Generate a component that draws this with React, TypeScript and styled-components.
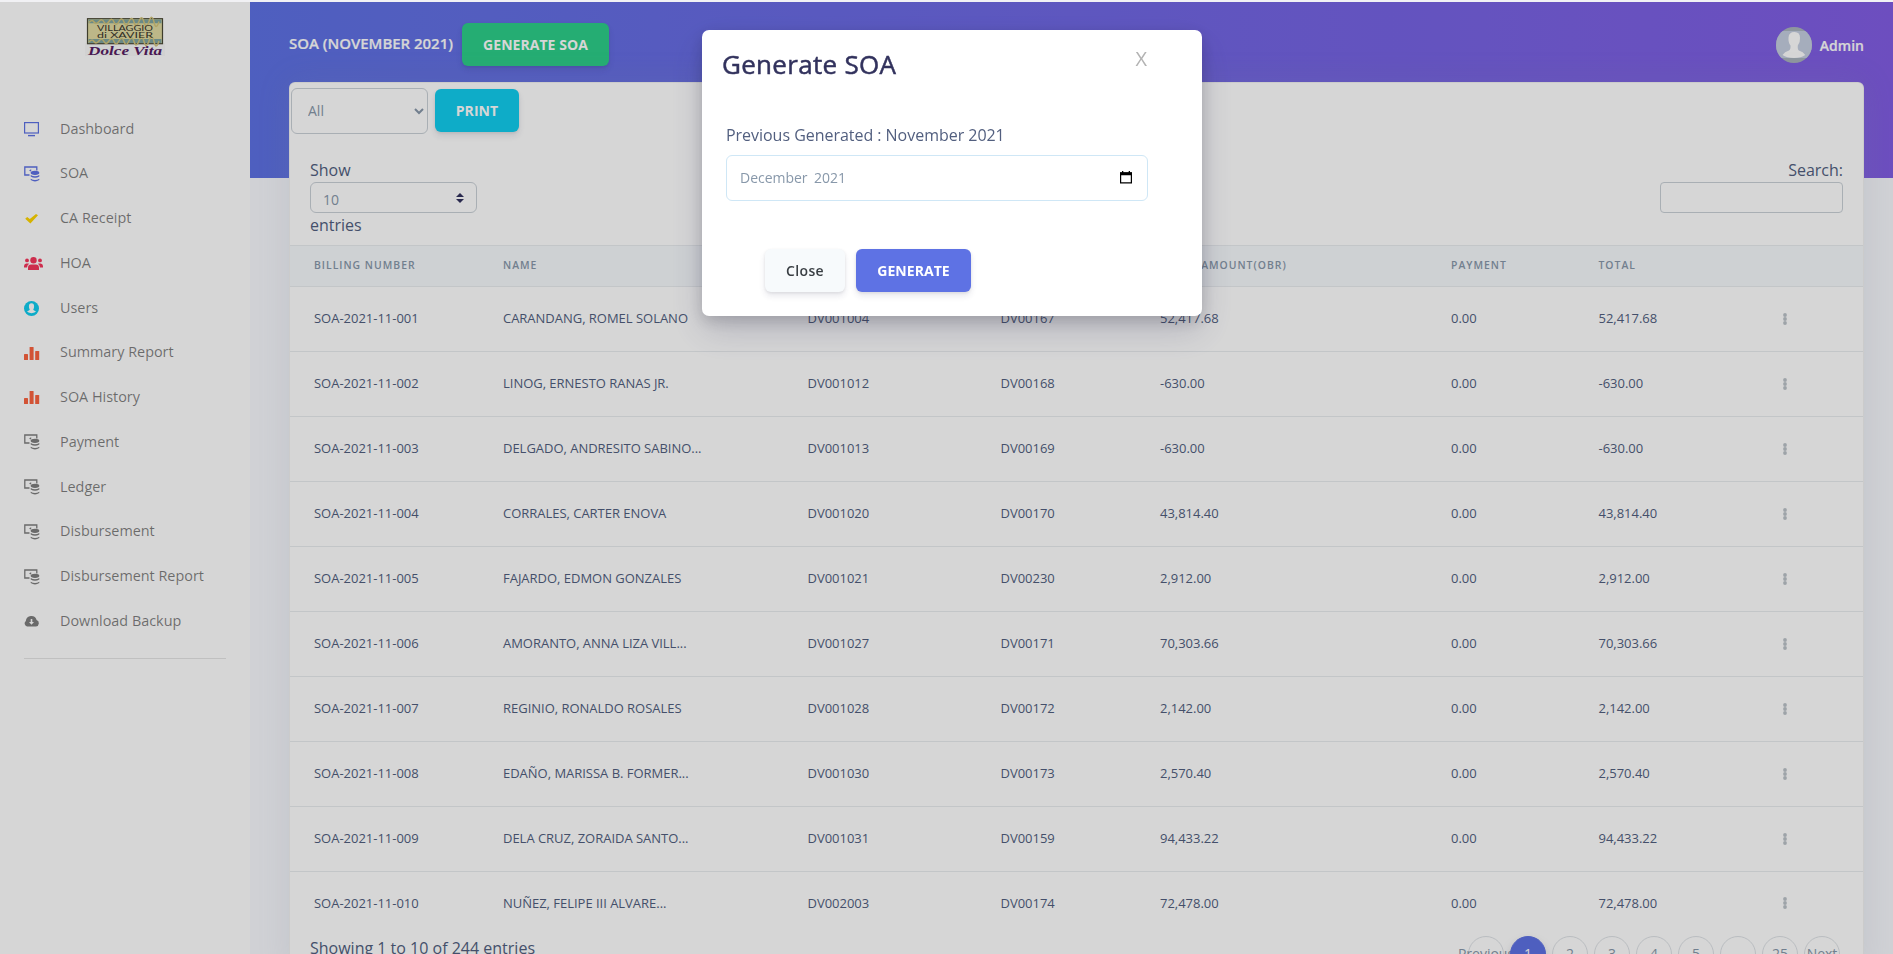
import React from "react";
import styled, { createGlobalStyle, css } from "styled-components";

const Global = createGlobalStyle`
  *, *::before, *::after { box-sizing: border-box; }
  html, body { margin: 0; height: 954px; overflow: hidden; }
  body {
    font-family: "Open Sans", sans-serif;
    font-size: 16px;
    line-height: 1.5;
    color: #525f7f;
    background: #fff;
  }
  button, input, select { font-family: inherit; margin: 0; }
`;

const Page = styled.div`
  display: flex;
  height: 954px;
  overflow: hidden;
  border-top: 2px solid #f1f1f4;
  background: #f8f9fe;
`;

const Sidebar = styled.nav`
  width: 250px;
  flex: none;
  background: #fff;
  box-shadow: 0 0 32px 0 rgba(136, 152, 170, 0.15);
`;

const Brand = styled.div`
  display: flex;
  justify-content: center;
  height: 104px;
  padding-top: 14px;
  svg { display: block; }
`;

const Menu = styled.ul`
  list-style: none;
  margin: 0 24px;
  padding: 0 0 15px;
  border-bottom: 1px solid rgba(0, 0, 0, 0.1);
`;

const MenuItem = styled.li<{ $tint: string }>`
  display: flex;
  align-items: center;
  height: 44.78px;
  font-size: 14.4px;
  color: rgba(0, 0, 0, 0.5);
  svg { flex: none; width: 20px; height: 17px; margin-right: 16px; color: ${(p) => p.$tint}; overflow: visible; position: relative; top: 1px; }
`;

const Main = styled.main`
  flex: 1;
  min-width: 0;
  display: flex;
  flex-direction: column;
  padding: 0 29px 0 39px;
  background: linear-gradient(87deg, #5e72e4 0, #825ee4 100%) 0 0 / 100% 176px no-repeat #f8f9fe;
`;

const Topbar = styled.header`
  display: flex;
  align-items: flex-start;
  height: 80px;
  flex: none;
  padding-top: 21px;
  color: #fff;
`;

const PageName = styled.h4`
  margin: 8px 9px 0 0;
  font-size: 15px;
  line-height: 24px;
  font-weight: 600;
  letter-spacing: -0.03px;
  -webkit-text-stroke: 0.2px currentColor;
`;

const tones = {
  success: css`background: #2dce89; color: #fff; font-weight: 700; letter-spacing: 0.05px;`,
  info: css`background: #11cdef; color: #fff; font-weight: 700; letter-spacing: 0.05px;`,
  primary: css`background: #5e72e4; color: #fff; font-weight: 700; letter-spacing: 0.05px;`,
  light: css`background: #f7fafc; color: #3a3f44; font-weight: 600; letter-spacing: 0.35px;`,
};

const Button = styled.button<{ $tone: keyof typeof tones; $width: number }>`
  width: ${(p) => p.$width}px;
  height: 43px;
  padding: 0;
  border: 0;
  border-radius: 6px;
  font-size: 14px;
  line-height: 21px;
  box-shadow: 0 4px 6px rgba(50, 50, 93, 0.11), 0 1px 3px rgba(0, 0, 0, 0.08);
  ${(p) => tones[p.$tone]}
`;

const Account = styled.div`
  display: flex;
  align-items: center;
  gap: 8px;
  margin: 4px 0 0 auto;
  font-size: 14px;
  font-weight: 600;
  -webkit-text-stroke: 0.2px currentColor;
  svg { display: block; }
`;

const Card = styled.section`
  flex: 1;
  background: #fff;
  border: 1px solid rgba(0, 0, 0, 0.05);
  border-radius: 6px;
  box-shadow: 0 0 32px 0 rgba(136, 152, 170, 0.15);
`;

const Actions = styled.div`
  display: flex;
  align-items: center;
  gap: 7px;
  padding: 5px 1px 0;
  button { margin-bottom: 2px; }
`;

const fieldBase = css`
  border: 1px solid #cad1d7;
  border-radius: 6px;
  background: #fff;
  color: #8898aa;
  font-size: 14px;
`;

const Filter = styled.select`
  ${fieldBase}
  width: 137px;
  height: 46px;
  padding: 9px 12px 11px;
`;

const Controls = styled.div`
  display: flex;
  justify-content: space-between;
  height: 111px;
  padding: 24px 20px 0;
`;

const Length = styled.label`
  display: flex;
  flex-direction: column;
`;

const LengthBox = styled.span`
  ${fieldBase}
  display: flex;
  align-items: center;
  justify-content: space-between;
  width: 167px;
  height: 31px;
  padding: 3px 12px 0;
  svg { display: block; margin-bottom: 3px; }
`;

const Search = styled.label`
  display: flex;
  flex-direction: column;
  align-items: flex-end;
  input { ${fieldBase} width: 183px; height: 31px; border-radius: 4px; }
`;

const Table = styled.table`
  width: 100%;
  table-layout: fixed;
  border-collapse: collapse;
  th, td { padding: 0 0 0 24px; text-align: left; white-space: nowrap; overflow: hidden; }
  th {
    height: 41px;
    background: #f6f9fc;
    color: #8898aa;
    font-size: 10.4px;
    font-weight: 600;
    letter-spacing: 1px;
    border-top: 1px solid #e9ecef;
    border-bottom: 1px solid #e9ecef;
  }
  td { height: 65px; font-size: 13px; letter-spacing: -0.02px; border-top: 1px solid #e9ecef; }
  tr:last-child td { height: 64px; }
`;

const Dots = styled.span`
  display: flex;
  margin: 0 0 1px -3px;
  svg { display: block; fill: #bcc3c9; }
`;

const Footer = styled.div`
  display: flex;
  justify-content: space-between;
  padding: 0 20px;
`;

const Pages = styled.div`
  display: flex;
  gap: 6px;
  padding-right: 3px;
`;

const PageLink = styled.span<{ $active?: boolean }>`
  display: flex;
  align-items: center;
  justify-content: center;
  width: 36px;
  height: 36px;
  border: 1px solid ${(p) => (p.$active ? "#5e72e4" : "#dee2e6")};
  border-radius: 50%;
  background: ${(p) => (p.$active ? "#5e72e4" : "transparent")};
  color: ${(p) => (p.$active ? "#fff" : "#8898aa")};
  font-size: 14px;
  white-space: nowrap;
  ${(p) => p.$active && css`box-shadow: 0 7px 14px rgba(50, 50, 93, 0.1), 0 3px 6px rgba(0, 0, 0, 0.08);`}
`;

const Backdrop = styled.div`
  position: fixed;
  inset: 2px 0 0 0;
  z-index: 5;
  display: flex;
  justify-content: center;
  align-items: flex-start;
  padding: 28px 0 0 11px;
  background: rgba(0, 0, 0, 0.16);
`;

const Modal = styled.div`
  width: 500px;
  height: 286px;
  padding: 16px 20px 0;
  border-radius: 7px;
  background: #fff;
  box-shadow: 0 15px 35px rgba(50, 50, 93, 0.2), 0 5px 15px rgba(0, 0, 0, 0.17);
`;

const ModalHead = styled.div`
  display: flex;
  justify-content: space-between;
  height: 77px;
  padding-right: 35px;
`;

const ModalTitle = styled.h2`
  margin: 0;
  font-size: 26px;
  font-weight: 500;
  line-height: 37px;
  letter-spacing: 0.3px;
  -webkit-text-stroke: 0.5px currentColor;
  color: #32325d;
`;

const Dismiss = styled.button`
  align-self: flex-start;
  padding: 0;
  border: 0;
  background: none;
  color: #b3b3b3;
  font-size: 20px;
  line-height: 26px;
`;

const ModalBody = styled.div`
  padding: 0 0 0 4px;
  letter-spacing: -0.03px;
`;

const MonthField = styled.div`
  display: flex;
  align-items: center;
  justify-content: space-between;
  width: 422px;
  height: 46px;
  margin-top: 8px;
  padding: 0 15px 2px 13px;
  border: 1px solid #cfe7f6;
  border-radius: 6px;
  background: #fff;
  color: #8898aa;
  font-size: 14px;
  word-spacing: 3px;
  svg { display: block; }
`;

const ModalFoot = styled.div`
  display: flex;
  gap: 11px;
  padding: 48px 0 0 43px;
`;

const Coins = () => (
  <svg viewBox="0 0 20 17">
    <path d="M5.5 9H.8V1h12v3.6" fill="none" stroke="currentColor" strokeWidth="1.3" />
    <path d="M5.2 4.3l2-1v1.7l-1 .6z" fill="currentColor" />
    <ellipse cx="11" cy="6.8" rx="4.3" ry="2.1" fill="currentColor" />
    <path d="M6.7 9q4.3 2.4 8.6 0v1.4q-4.3 2.6-8.6 0zM6.7 12.7q4.3 2.4 8.6 0v1.4q-4.3 2.6-8.6 0z" fill="currentColor" />
  </svg>
);

const Tv = () => (
  <svg viewBox="0 0 20 17">
    <rect x=".6" y="1.6" width="13.8" height="10.4" fill="none" stroke="currentColor" strokeWidth="1.2" />
    <path d="M4 14.6h7" stroke="currentColor" strokeWidth="1.4" />
  </svg>
);

const Check = () => (
  <svg viewBox="0 0 20 17">
    <path d="M1.2 8.8l2-1.7 2.6 2L12 4l2 1.2-7.6 8.2z" fill="currentColor" />
  </svg>
);

const People = () => (
  <svg viewBox="0 0 20 17" fill="currentColor">
    <circle cx="9.5" cy="5.2" r="3.2" />
    <circle cx="3" cy="5.4" r="1.9" />
    <circle cx="16" cy="5.4" r="1.9" />
    <path d="M4 15v-2.2Q4.2 9.6 7 9.6h5q2.8 0 3 3.2V15zM0 12.5V11Q.2 8.4 2.3 8.4h2l.8.4q-1.8 1.2-2.1 3.7zM19 12.5V11q-.2-2.6-2.3-2.6h-2l-.8.4q1.8 1.2 2.1 3.7z" />
  </svg>
);

const UserCircle = () => (
  <svg viewBox="0 0 20 17">
    <circle cx="7.5" cy="8.5" r="7.5" fill="currentColor" />
    <path d="M4.9 6.3a2.6 3 0 0 1 5.2 0Q10.1 8.6 9.2 9.6q.2 1 2.8 1.7-.8 1.5-4.5 1.9-3.7-.4-4.5-1.9 2.6-.7 2.8-1.7Q4.9 8.6 4.9 6.3z" fill="#fff" />
  </svg>
);

const Bars = () => (
  <svg viewBox="0 0 20 17" fill="currentColor">
    <rect x="0" y="9" width="4" height="6" rx=".6" />
    <rect x="5.6" y="2" width="4" height="13" rx=".6" />
    <rect x="11.2" y="6" width="4" height="9" rx=".6" />
  </svg>
);

const Cloud = () => (
  <svg viewBox="0 0 20 17">
    <path d="M3 13.5A3.2 3.2 0 0 1 1.8 7.9 5.5 5.5 0 0 1 12.6 7.1 3.3 3.3 0 0 1 12 13.5z" fill="currentColor" />
    <path d="M6.7 6h1.6v3H10l-2.5 2.8L5 9h1.7z" fill="#fff" />
  </svg>
);

const Calendar = () => (
  <svg width="12" height="13" viewBox="0 0 12 13">
    <path d="M.6 2.2h10.8v9.700H.6z" fill="none" stroke="#000" strokeWidth="1.2" />
    <path d="M0 1.3h12v3H0zM2 0h1.3v2H2zM8.7 0H10v2H8.7z" fill="#000" />
  </svg>
);

const Logo = () => (
  <svg width="80" height="42" viewBox="0 0 80 42">
    <rect x="0" y="27" width="80" height="13" fill="#fafafa" />
    <rect x="2.5" y="2.7" width="75" height="25" fill="#e0dba2" stroke="#4a4936" strokeWidth="1.2" />
    <path d="M3.5 5.3h73M3.5 25h73" stroke="#7fa5a0" strokeWidth="3.8" />
    <path
      d="M4 6.5q3-3.5 5-.5t5-.5 5 .5 5-.5 5 .5 5-.5 5 .5 5-.5 5 .5 5-.5 5 .5 5-.5 5 .5 5-.5M4 26q3-3.5 5-.5t5-.5 5 .5 5-.5 5 .5 5-.5 5 .5 5-.5 5 .5 5-.5 5 .5 5-.5 5 .5 5-.5"
      fill="none" stroke="#d3c47a" strokeWidth="1.5"
    />
    <text x="40" y="14.5" textAnchor="middle" fontFamily="Lato, sans-serif" fontSize="7.4" textLength="56" lengthAdjust="spacingAndGlyphs" fill="#3a362c">VILLAGGIO</text>
    <text x="40" y="22" textAnchor="middle" fontFamily="Lato, sans-serif" fontSize="8" textLength="56" lengthAdjust="spacingAndGlyphs" fill="#3a362c">di XAVIER</text>
    <text x="40" y="38.5" textAnchor="middle" fontFamily="Liberation Serif, serif" fontStyle="italic" fontWeight="700" fontSize="13" textLength="74" lengthAdjust="spacingAndGlyphs" fill="#571d63">Dolce Vita</text>
  </svg>
);

const Avatar = () => (
  <svg width="36" height="36" viewBox="0 0 36 36">
    <clipPath id="round"><circle cx="18" cy="18" r="18" /></clipPath>
    <g clipPath="url(#round)">
      <rect width="36" height="36" fill="#aab4bd" />
      <rect y="4" width="36" height="27" fill="#c5cee0" />
      <path d="M12.5 10.5Q12.8 5 18.5 5t5.5 6q.3 4.5-2.2 7.5-.3 4 1 5 4.5 1.3 6.5 4.5-4 3-11.3 3T6.500 28q2-3.200 6.500-4.500 1.800-1 1.500-5-2.400-3-2-8z" fill="#fff" />
    </g>
  </svg>
);

const menu: [string, string, React.FC][] = [
  ["Dashboard", "#5e72e4", Tv],
  ["SOA", "#5e72e4", Coins],
  ["CA Receipt", "#ffd600", Check],
  ["HOA", "#f5365c", People],
  ["Users", "#11cdef", UserCircle],
  ["Summary Report", "#fb6340", Bars],
  ["SOA History", "#fb6340", Bars],
  ["Payment", "#7f7f7f", Coins],
  ["Ledger", "#7f7f7f", Coins],
  ["Disbursement", "#7f7f7f", Coins],
  ["Disbursement Report", "#7f7f7f", Coins],
  ["Download Backup", "#7f7f7f", Cloud],
];

const widths = [189, 304.5, 193, 159.5, 291, 147.5, 187, 101.5];
const heads = ["BILLING NUMBER", "NAME", "", "", "TOTAL AMOUNT(OBR)", "PAYMENT", "TOTAL", ""];

const rows: [string, string, string, string][] = [
  ["CARANDANG, ROMEL SOLANO", "DV001004", "DV00167", "52,417.68"],
  ["LINOG, ERNESTO RANAS JR.", "DV001012", "DV00168", "-630.00"],
  ["DELGADO, ANDRESITO SABINO...", "DV001013", "DV00169", "-630.00"],
  ["CORRALES, CARTER ENOVA", "DV001020", "DV00170", "43,814.40"],
  ["FAJARDO, EDMON GONZALES", "DV001021", "DV00230", "2,912.00"],
  ["AMORANTO, ANNA LIZA VILL...", "DV001027", "DV00171", "70,303.66"],
  ["REGINIO, RONALDO ROSALES", "DV001028", "DV00172", "2,142.00"],
  ["EDAÑO, MARISSA B. FORMER...", "DV001030", "DV00173", "2,570.40"],
  ["DELA CRUZ, ZORAIDA SANTO...", "DV001031", "DV00159", "94,433.22"],
  ["NUÑEZ, FELIPE III ALVARE...", "DV002003", "DV00174", "72,478.00"],
];

const pages = ["Previous", "1", "2", "3", "4", "5", "…", "25", "Next"];

export default function App() {
  return (
    <>
      <Global />
      <Page>
        <Sidebar>
          <Brand><Logo /></Brand>
          <Menu>
            {menu.map(([label, tint, Icon]) => (
              <MenuItem key={label} $tint={tint}><Icon />{label}</MenuItem>
            ))}
          </Menu>
        </Sidebar>
        <Main>
          <Topbar>
            <PageName>SOA (NOVEMBER 2021)</PageName>
            <Button $tone="success" $width={147}>GENERATE SOA</Button>
            <Account><Avatar />Admin</Account>
          </Topbar>
          <Card>
            <Actions>
              <Filter defaultValue="All"><option>All</option></Filter>
              <Button $tone="info" $width={84}>PRINT</Button>
            </Actions>
            <Controls>
              <Length>
                Show
                <LengthBox>
                  10
                  <svg width="8" height="10" viewBox="0 0 8 10" fill="#32325d"><path d="M4 0l4 4H0zM4 10L0 6h8z" /></svg>
                </LengthBox>
                entries
              </Length>
              <Search>Search:<input type="text" /></Search>
            </Controls>
            <Table>
              <colgroup>{widths.map((w, i) => <col key={i} width={w} />)}</colgroup>
              <thead><tr>{heads.map((h, i) => <th key={i}>{h}</th>)}</tr></thead>
              <tbody>
                {rows.map(([name, account, unit, amount], i) => (
                  <tr key={account}>
                    <td>SOA-2021-11-{String(i + 1).padStart(3, "0")}</td>
                    <td>{name}</td>
                    <td>{account}</td>
                    <td>{unit}</td>
                    <td>{amount}</td>
                    <td>0.00</td>
                    <td>{amount}</td>
                    <td>
                      <Dots>
                        <svg width="4" height="12" viewBox="0 0 4 12"><circle cx="2" cy="2" r="1.9" /><circle cx="2" cy="6" r="1.9" /><circle cx="2" cy="10" r="1.9" /></svg>
                      </Dots>
                    </td>
                  </tr>
                ))}
              </tbody>
            </Table>
            <Footer>
              <span>Showing 1 to 10 of 244 entries</span>
              <Pages>{pages.map((p) => <PageLink key={p} $active={p === "1"}>{p}</PageLink>)}</Pages>
            </Footer>
          </Card>
        </Main>
      </Page>
      <Backdrop>
        <Modal>
          <ModalHead>
            <ModalTitle>Generate SOA</ModalTitle>
            <Dismiss>X</Dismiss>
          </ModalHead>
          <ModalBody>
            Previous Generated : November 2021
            <MonthField>December 2021<Calendar /></MonthField>
          </ModalBody>
          <ModalFoot>
            <Button $tone="light" $width={80}>Close</Button>
            <Button $tone="primary" $width={115}>GENERATE</Button>
          </ModalFoot>
        </Modal>
      </Backdrop>
    </>
  );
}
